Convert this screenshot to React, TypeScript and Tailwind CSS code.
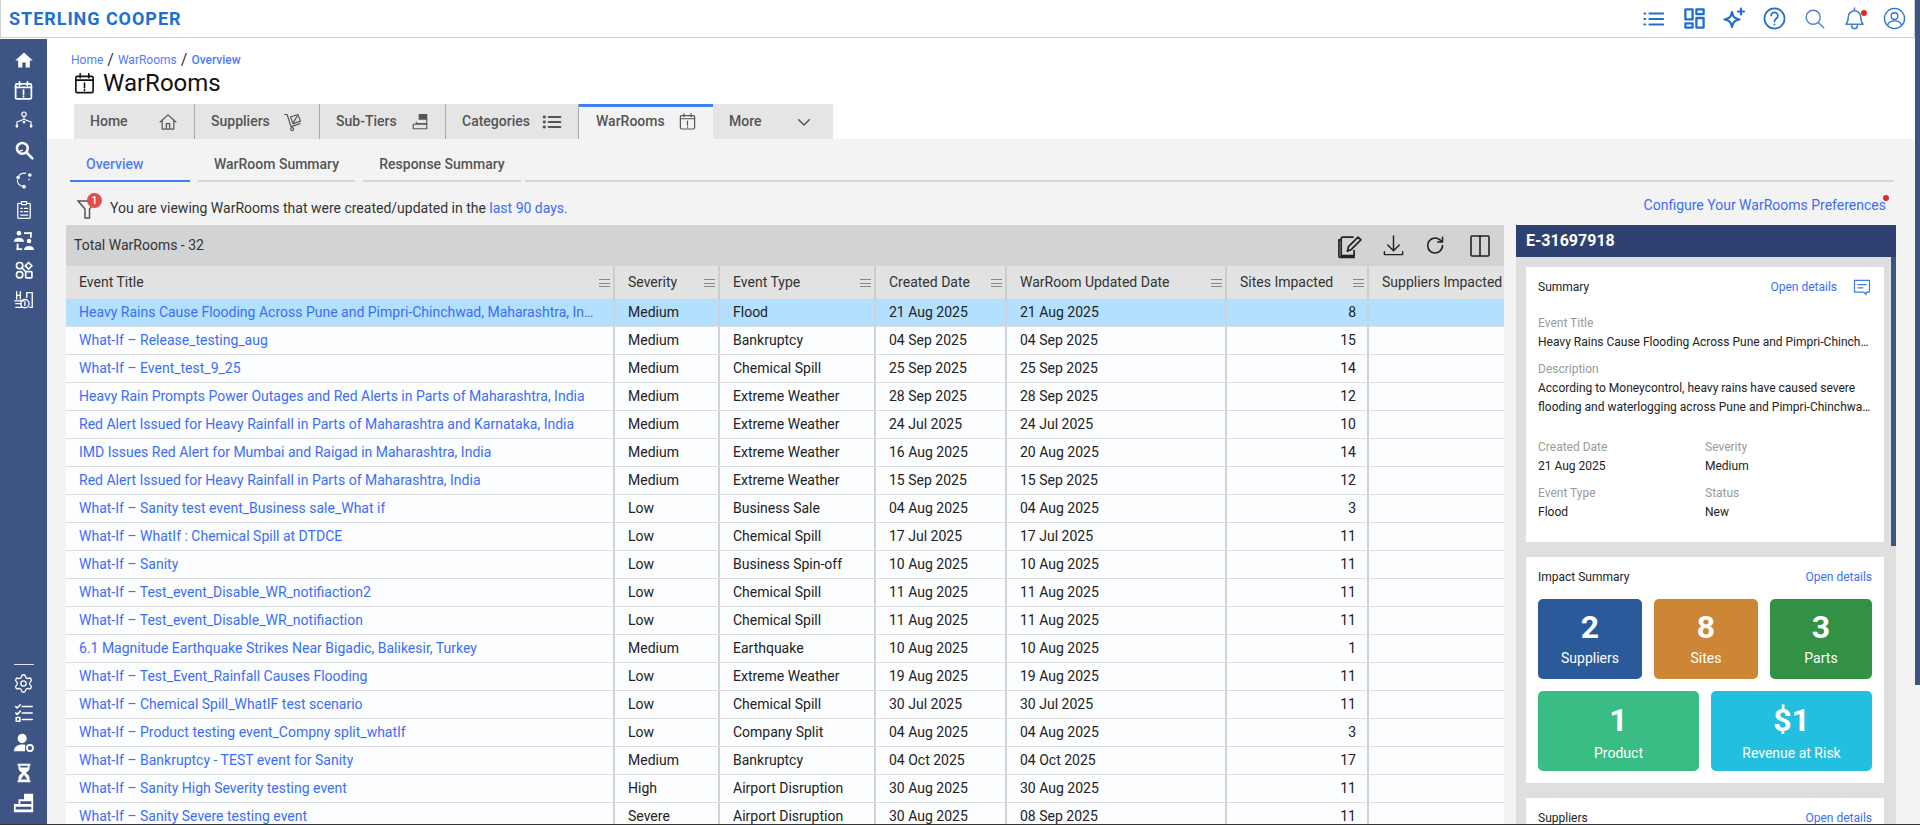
import React from "react";
import { Settings } from "lucide-react";

const Svg = ({ s = 20, c = "", children, fill = "none", sw = 1.6 }: any) => (
  <svg width={s} height={s} viewBox="0 0 24 24" fill={fill} stroke={fill === "none" ? "currentColor" : "none"} strokeWidth={sw} strokeLinecap="round" strokeLinejoin="round" className={c}>
    {children}
  </svg>
);

const CalAlert = ({ s = 20, c = "", sw = 2 }: any) => (
  <Svg s={s} c={c} sw={sw}>
    <rect x="3" y="4.5" width="18" height="17" rx="1.5" />
    <path d="M3 8.500h18M7.500 2v4M16.500 2v4M12 11.500v5M12 18.600v.6" />
  </Svg>
);

const sideTop = [
  <Svg key="a" fill="white"><path d="M12 3 1.500 12.500H5V21h5v-6h4v6h5v-8.500h3.500z" /></Svg>,
  <CalAlert key="b" s={21} sw={2} />,
  <Svg key="c" sw={1.400}><circle cx="12" cy="5" r="2.600" /><path d="M12 8v3M3.500 18v-3.500L12 11l8.500 3.500V18" /><circle cx="3.500" cy="19.500" r="1" fill="white" /><circle cx="20.500" cy="19.500" r="1" fill="white" /><circle cx="12" cy="14.500" r="1" fill="white" /></Svg>,
  <Svg key="d" sw={3}><circle cx="10" cy="10" r="6.500" /><path d="m15 15 7 7" /><path d="M6 15c.5-2 2-2.500 4-2.500" strokeWidth="1.500" /></Svg>,
  <Svg key="e" sw={1.400}><path d="M6 6.500A8 8 0 0 1 14 4M4 12a8 8 0 0 0 6 7.500" /><circle cx="19" cy="6" r="1.500" fill="white" /><circle cx="5" cy="9" r="1.500" fill="white" /><circle cx="12" cy="20" r="1.500" fill="white" /><path d="M18 11v1" /></Svg>,
  <Svg key="f" sw={1.500}><rect x="4.500" y="4" width="15" height="18" rx="1" /><rect x="9" y="2" width="6" height="3.500" fill="#3d5484" /><path d="M8 10h2M12.500 10h4M8 14h2M12.500 14h4M8 18h8.500" /></Svg>,
  <Svg key="g" fill="white" s={22}><circle cx="6.500" cy="4.500" r="2.500" /><path d="M1 14c0-3 2.500-4.500 5.500-4.500S12 11 12 14z" /><circle cx="17.500" cy="13" r="2.500" /><path d="M12 23c0-3 2.500-4.500 5.500-4.500S23 20 23 23z" /><rect x="12" y="3.500" width="8" height="2" /><rect x="18.500" y="3.500" width="2" height="6" /><rect x="4" y="16" width="2" height="7" /><rect x="4" y="21" width="6" height="2" /></Svg>,
  <Svg key="h" sw={2}><rect x="3" y="3" width="7.500" height="7.500" rx="3.500" /><path d="m17.500 3 4 4-4 4-4-4z" /><rect x="3" y="14" width="7.500" height="7.500" rx="3.500" /><rect x="14" y="14" width="7.500" height="7.500" rx="1" /><path d="m10 10 4 4" /></Svg>,
  <Svg key="i" sw={1.500} s={22}><path d="M4 3v8M8 3v8M4 7h4M2 13h10M3 16h6M3 20h7M15 4h6v16h-3M15 4v5" /><circle cx="13" cy="16" r="4.500" /><path d="M13 14v4" /></Svg>,
];

const sideBottom = [
  <Settings key="a" size={21} strokeWidth={1.500} />,
  <Svg key="b" sw={1.700} s={22}><path d="M10 5h11M10 12h11M10 19h11" /><path d="m3 5 1.500 1.500L8 3M3 12l1.500 1.500L8 10" /><rect x="3.500" y="17" width="4" height="4" /></Svg>,
  <Svg key="c" fill="white" s={22}><circle cx="10" cy="7" r="5" /><path d="M1 21c0-5 4-7.500 9-7.500 1.500 0 2.500.2 3.500.5l-.5 7z" /><circle cx="18.500" cy="17.500" r="3.300" fill="none" stroke="white" strokeWidth="2" /></Svg>,
  <Svg key="d" fill="white" s={22}><path d="M5 2h14v2h-1v3c0 2.500-3 4-4 5 1 1 4 2.500 4 5v3h1v2H5v-2h1v-3c0-2.500 3-4 4-5-1-1-4-2.500-4-5V4H5zm3 2v2h8V4zm4 10-3.500 5h7z" fillRule="evenodd" /></Svg>,
  <Svg key="e" fill="white" s={22}><path d="M12 2h10v20H1v-9h5V8h6zm-4 8v3h12v-3zM3 16v3h17v-3z" fillRule="evenodd" /></Svg>,
];

const cols = [
  "w-[549px]",
  "w-[105px]",
  "w-[156px]",
  "w-[131px]",
  "w-[220px]",
  "w-[142px]",
  "w-[180px]",
];
const heads = ["Event Title", "Severity", "Event Type", "Created Date", "WarRoom Updated Date", "Sites Impacted", "Suppliers Impacted"];

const rows: [string, string, string, string, string, string][] = [
  ["Heavy Rains Cause Flooding Across Pune and Pimpri-Chinchwad, Maharashtra, India", "Medium", "Flood", "21 Aug 2025", "21 Aug 2025", "8"],
  ["What-If – Release_testing_aug", "Medium", "Bankruptcy", "04 Sep 2025", "04 Sep 2025", "15"],
  ["What-If – Event_test_9_25", "Medium", "Chemical Spill", "25 Sep 2025", "25 Sep 2025", "14"],
  ["Heavy Rain Prompts Power Outages and Red Alerts in Parts of Maharashtra, India", "Medium", "Extreme Weather", "28 Sep 2025", "28 Sep 2025", "12"],
  ["Red Alert Issued for Heavy Rainfall in Parts of Maharashtra and Karnataka, India", "Medium", "Extreme Weather", "24 Jul 2025", "24 Jul 2025", "10"],
  ["IMD Issues Red Alert for Mumbai and Raigad in Maharashtra, India", "Medium", "Extreme Weather", "16 Aug 2025", "20 Aug 2025", "14"],
  ["Red Alert Issued for Heavy Rainfall in Parts of Maharashtra, India", "Medium", "Extreme Weather", "15 Sep 2025", "15 Sep 2025", "12"],
  ["What-If – Sanity test event_Business sale_What if", "Low", "Business Sale", "04 Aug 2025", "04 Aug 2025", "3"],
  ["What-If – WhatIf : Chemical Spill at DTDCE", "Low", "Chemical Spill", "17 Jul 2025", "17 Jul 2025", "11"],
  ["What-If – Sanity", "Low", "Business Spin-off", "10 Aug 2025", "10 Aug 2025", "11"],
  ["What-If – Test_event_Disable_WR_notifiaction2", "Low", "Chemical Spill", "11 Aug 2025", "11 Aug 2025", "11"],
  ["What-If – Test_event_Disable_WR_notifiaction", "Low", "Chemical Spill", "11 Aug 2025", "11 Aug 2025", "11"],
  ["6.1 Magnitude Earthquake Strikes Near Bigadic, Balikesir, Turkey", "Medium", "Earthquake", "10 Aug 2025", "10 Aug 2025", "1"],
  ["What-If – Test_Event_Rainfall Causes Flooding", "Low", "Extreme Weather", "19 Aug 2025", "19 Aug 2025", "11"],
  ["What-If – Chemical Spill_WhatIF test scenario", "Low", "Chemical Spill", "30 Jul 2025", "30 Jul 2025", "11"],
  ["What-If – Product testing event_Compny split_whatIf", "Low", "Company Split", "04 Aug 2025", "04 Aug 2025", "3"],
  ["What-If – Bankruptcy - TEST event for Sanity", "Medium", "Bankruptcy", "04 Oct 2025", "04 Oct 2025", "17"],
  ["What-If – Sanity High Severity testing event", "High", "Airport Disruption", "30 Aug 2025", "30 Aug 2025", "11"],
  ["What-If – Sanity Severe testing event", "Severe", "Airport Disruption", "30 Aug 2025", "08 Sep 2025", "11"],
];

const tabs = [
  {
    t: "Home", w: "w-[121px]",
    i: <Svg s={20} sw={1.400}><path d="M2.500 12 12 3.500 21.500 12M5 10v10.500h14V10M10 20.500V14h4v6.500" /></Svg>,
  },
  {
    t: "Suppliers", w: "w-[125px]",
    i: <Svg s={20} sw={1.400}><path d="M2 3h3l4.500 14.500M9.500 17.500l11-3.500" /><path d="m9 6 9-3 3 8-9 3z" /><path d="m12 13 5-8" /><circle cx="11" cy="20.500" r="1.800" /></Svg>,
  },
  {
    t: "Sub-Tiers", w: "w-[126px]",
    i: <Svg s={18} sw={1.500}><rect x="11" y="2" width="10" height="6" fill="currentColor" /><path d="M11 8h10v6H7v-2M3 15h18v6H3z" /></Svg>,
  },
  {
    t: "Categories", w: "w-[133px]",
    i: <Svg s={20} sw={2.400}><path d="M8 6h14M8 12h14M8 18h14" /><path d="M2.500 6h.5M2.500 12h.5M2.500 18h.5" strokeWidth="3.400" /></Svg>,
  },
];

const Tile = ({ n, l, c, w = "flex-1", g = "mt-[2px]", t = "mt-[9px]" }: { n: string; l: string; c: string; w?: string; g?: string; t?: string }) => (
  <div className={`${w} h-[80px] rounded-[5px] text-white flex flex-col items-center ${c}`}>
    <div className={`text-[32px] font-bold leading-[38px] ${t}`}>{n}</div>
    <div className={`text-[14px] leading-[20px] ${g}`}>{l}</div>
  </div>
);

const Field = ({ l, v, c = "" }: { l: string; v: string; c?: string }) => (
  <div className={c}>
    <div className="text-[12px] leading-[19px] text-[#9a9a9a]">{l}</div>
    <div className="text-[12px] leading-[19px] text-[#222] truncate">{v}</div>
  </div>
);

const LINK = "text-[#3b6ef8]";

export default function App() {
  return (
    <div className="w-[1920px] h-[825px] flex overflow-hidden text-[#222] bg-white" style={{ fontFamily: "Roboto, sans-serif" }}>
      <div className="w-[1915px] h-[824px] flex flex-col">
        {/* Header */}
        <div className="h-[38px] shrink-0 border-b border-l border-r border-[#cfcfcf] flex items-center justify-between pl-[8px] bg-white">
          <div className="text-[18px] font-bold tracking-[0.95px] text-[#1f6fd0]">STERLING COOPER</div>
          <div className="flex items-center text-[#1f6fd0]">
            <div className="w-[40px] flex justify-center"><Svg s={22} sw={2.200}><path d="M7 6h15M7 12h15M7 18h15" /><path d="M1.500 6h1M1.500 12h1M1.500 18h1" /></Svg></div>
            <div className="w-[40px] flex justify-center"><Svg sw={2.400} s={23}><rect x="2.500" y="2.500" width="7.500" height="10.500" /><rect x="14" y="2.500" width="7.500" height="5" /><rect x="2.500" y="17" width="7.500" height="4.500" /><rect x="14" y="11.500" width="7.500" height="10" /></Svg></div>
            <div className="w-[40px] flex justify-center"><Svg s={24} sw={2.200}><path d="M10 5c1 5 2.500 6.500 7.500 7.500C12.500 13.500 11 15 10 20 9 15 7.500 13.500 2.500 12.500 7.500 11.500 9 10 10 5zM19 1.500v6M16 4.500h6" /></Svg></div>
            <div className="w-[40px] flex justify-center"><Svg s={23} sw={1.800}><circle cx="12" cy="12" r="10.500" /><path d="M8.500 9a3.500 3.500 0 1 1 5.500 3c-1.300.8-2 1.500-2 3M12 18v.3" /></Svg></div>
            <div className="w-[40px] flex justify-center"><Svg s={21} sw={1.600} c="text-[#4a7fd4]"><circle cx="10.500" cy="10.500" r="8" /><path d="m16.500 16.500 6 6" /></Svg></div>
            <div className="w-[40px] flex justify-center">
              <div className="relative text-[#4a7fd4]">
                <Svg s={23} sw={1.600}><path d="M12 1v2M3 18c2-2 2.500-3.500 2.500-7.500a6.500 6.500 0 0 1 13 0c0 4 .5 5.500 2.500 7.500zM9 18v1.500a3 3 0 0 0 6 0V18" /></Svg>
                <span className="absolute top-[3px] right-[-1px] w-[6px] h-[6px] rounded-full bg-[#e32929]" />
              </div>
            </div>
            <div className="w-[40px] flex justify-center"><Svg s={23} sw={1.400} c="text-[#2f74cf]"><circle cx="12" cy="12" r="10.500" /><circle cx="12" cy="9.500" r="3.500" /><path d="M5 19c.5-3 3-4.500 7-4.500s6.500 1.500 7 4.500" /></Svg></div>
          </div>
        </div>

        <div className="flex-1 flex mt-px min-h-0">
          {/* Sidebar */}
          <div className="w-[47px] shrink-0 bg-[#3d5484] text-white flex flex-col justify-between items-center pt-[6px] pb-[6px]">
            <div className="flex flex-col items-center">
              {sideTop.map((ic, i) => (
                <div key={i} className="h-[30px] flex items-center justify-center">{ic}</div>
              ))}
            </div>
            <div className="flex flex-col items-center">
              <div className="w-[20px] h-[1px] bg-[#dfe4ee] mb-[3px]" />
              {sideBottom.map((ic, i) => (
                <div key={i} className="h-[30px] flex items-center justify-center">{ic}</div>
              ))}
            </div>
          </div>

          {/* Main */}
          <div className="flex-1 min-w-0 flex flex-col">
            <div className="h-[100px] shrink-0 bg-white pl-[24px] pt-[12px]">
              <div className="h-[17px] flex items-center text-[12px] text-[#4f7dff] gap-[4px]">
                <span>Home</span>
                <span className="text-[16px] text-[#333]">/</span>
                <span>WarRooms</span>
                <span className="text-[16px] text-[#333]">/</span>
                <span className="font-medium">Overview</span>
              </div>
              <div className="flex items-center h-[30px] ml-[2px] text-[#111]">
                <CalAlert s={23} sw={1.700} />
                <span className="text-[24px] ml-[7px] leading-[30px]">WarRooms</span>
              </div>
              <div className="flex h-[35px] ml-[3px] mt-[6px]">
                {tabs.map((t) => (
                  <div key={t.t} className={`${t.w} h-[35px] bg-[#e5e5e5] border-r border-[#a9a9a9] flex items-center justify-between pl-[16px] pr-[16px] text-[14px] font-medium text-[#555]`}>
                    <span>{t.t}</span>
                    {t.i}
                  </div>
                ))}
                <div className="w-[134px] h-[35px] bg-[#f3f3f3] border-t-[3px] border-[#3f80f4] flex items-center justify-between pl-[17px] pr-[16px] pb-[3px] text-[14px] font-medium text-[#555]">
                  <span>WarRooms</span>
                  <CalAlert s={19} sw={1.500} />
                </div>
                <div className="w-[120px] h-[35px] bg-[#e5e5e5] flex items-center justify-between pl-[16px] pr-[20px] text-[14px] font-medium text-[#555]">
                  <span>More</span>
                  <Svg s={18} sw={2}><path d="m5 9 7 7 7-7" /></Svg>
                </div>
              </div>
            </div>

            <div className="flex-1 min-h-0 bg-[#f3f3f3] flex flex-col overflow-hidden">
              {/* Sub tabs */}
              <div className="h-[43px] shrink-0 flex pl-[23px] pr-[21px] text-[14px] font-medium text-[#555]">
                <div className="w-[120px] border-b-[2px] border-[#3f80f4] text-[#4f7dff] flex items-center pl-[16px] pt-[14px] pb-[5px]">Overview</div>
                <div className="w-[157px] ml-[8px] border-b-[2px] border-[#d6d6d6] flex items-center justify-center pt-[14px] pb-[5px]">WarRoom Summary</div>
                <div className="w-[158px] ml-[8px] border-b-[2px] border-[#d6d6d6] flex items-center justify-center pt-[14px] pb-[5px]">Response Summary</div>
                <div className="flex-1 ml-[4px] border-b-[2px] border-[#d6d6d6]" />
              </div>

              {/* Info row */}
              <div className="h-[43px] shrink-0 flex justify-between pl-[29px] pr-[29px] text-[14px]">
                <div className="flex items-start">
                  <div className="relative w-[34px] h-[26px] mt-[11px] text-[#555]">
                    <svg width="20" height="20" viewBox="0 0 20 20" fill="none" stroke="currentColor" strokeWidth="1.500" className="absolute left-[1px] top-[6px]">
                      <path d="M1 2h18l-6.500 8v9H8v-9z" />
                    </svg>
                    <span className="absolute left-[11px] top-[0px] w-[15px] h-[15px] rounded-full bg-[#df4d4d] text-white text-[11px] font-medium leading-[15px] text-center">1</span>
                  </div>
                  <span className="mt-[16px] leading-[21px] text-[#333]">You are viewing WarRooms that were created/updated in the <span className={LINK}>last 90 days.</span></span>
                </div>
                <div className={`relative ${LINK} mt-[13px] h-[21px] leading-[21px]`}>
                  Configure Your WarRooms Preferences
                  <span className="absolute right-[-3px] top-[0px] w-[6px] h-[6px] rounded-full bg-[#e32929]" />
                </div>
              </div>

              <div className="flex-1 min-h-0 flex pl-[19px]">
                {/* Table */}
                <div className="w-[1438px] shrink-0 overflow-hidden flex flex-col">
                  <div className="h-[41px] shrink-0 bg-[#d3d3d3] flex items-center justify-between pl-[8px] pr-[12px] text-[14px] text-[#333]">
                    <span>Total WarRooms - 32</span>
                    <div className="flex items-center text-[#222]">
                      <Svg s={27} sw={1.500}><path d="M16 4.500H7a1.500 1.500 0 0 0-1.500 1.500v15H17M5.500 7H3.500v14.500a1 1 0 0 0 1 1H17" /><path d="M17 21v-4.500M11 17l1-4 8.500-8.500 2.500 2.500L14.500 15.500z" /></Svg>
                      <Svg s={23} sw={1.500} c="ml-[20px]"><path d="M12 2v15M6 11.500l6 6 6-6M2.500 18.500v3h19v-3" /></Svg>
                      <Svg s={21} sw={1.800} c="ml-[20px]"><path d="M20 12a8.500 8.500 0 1 1-3-6.500L20 8M20 2.500V8h-5.500" /></Svg>
                      <Svg s={24} sw={1.600} c="ml-[22px]"><rect x="3" y="2" width="18" height="20" rx="1" /><path d="M12 2v20" /></Svg>
                    </div>
                  </div>
                  <div className="h-[33px] shrink-0 bg-[#e2e2e2] flex w-[1483px] text-[14px] text-[#333]">
                    {heads.map((h, i) => (
                      <div key={h} className={`${cols[i]} shrink-0 h-full relative flex items-center pl-[13px] ${i < 6 ? "border-r-2 border-[#c9ced3]" : ""}`}>
                        <span className="whitespace-nowrap">{h}</span>
                        {i < 6 && (
                          <span className="absolute right-[3px] top-[13px] w-[11px] h-[8px] border-y-[1px] border-[#888] flex items-center">
                            <span className="w-full h-[1px] bg-[#888]" />
                          </span>
                        )}
                      </div>
                    ))}
                  </div>
                  {rows.map((r, ri) => (
                    <div key={ri} className={`h-[28px] shrink-0 flex w-[1483px] text-[14px] border-b border-[#dcdde0] ${ri === 0 ? "bg-[#b3e0fe]" : "bg-[#fcfdff]"}`}>
                      <div className={`${cols[0]} shrink-0 border-r-2 border-[#cfd3d7] pl-[13px] pr-[17px] flex items-center min-w-0`}>
                        <span className={`truncate ${LINK}`}>{r[0]}</span>
                      </div>
                      <div className={`${cols[1]} shrink-0 border-r-2 border-[#cfd3d7] pl-[13px] flex items-center`}>{r[1]}</div>
                      <div className={`${cols[2]} shrink-0 border-r-2 border-[#cfd3d7] pl-[13px] flex items-center`}>{r[2]}</div>
                      <div className={`${cols[3]} shrink-0 border-r-2 border-[#cfd3d7] pl-[13px] flex items-center`}>{r[3]}</div>
                      <div className={`${cols[4]} shrink-0 border-r-2 border-[#cfd3d7] pl-[13px] flex items-center`}>{r[4]}</div>
                      <div className={`${cols[5]} shrink-0 border-r-2 border-[#cfd3d7] pr-[11px] flex items-center justify-end`}>{r[5]}</div>
                      <div className={`${cols[6]} shrink-0`} />
                    </div>
                  ))}
                </div>

                {/* Right panel */}
                <div className="w-[380px] ml-[12px] shrink-0 flex flex-col">
                  <div className="h-[32px] shrink-0 bg-[#2e4170] text-white text-[16px] font-bold pl-[10px] flex items-center">E-31697918</div>
                  <div className="flex-1 min-h-0 flex bg-[#dfdfdf] overflow-hidden">
                    <div className="flex-1 min-w-0 pl-[10px] pr-[7px] pt-[10px] flex flex-col gap-[15px]">
                      {/* Summary */}
                      <div className="h-[275px] shrink-0 bg-white pl-[12px] pr-[12px] pt-[10px]">
                        <div className="flex items-center justify-between h-[19px] text-[12px]">
                          <span>Summary</span>
                          <div className="flex items-center">
                            <span className={LINK}>Open details</span>
                            <Svg s={20} sw={1.500} c="ml-[15px] text-[#3f80e0]"><path d="M3 4h18v14h-4v3l-3-3H3z" /><path d="M7 9h10M7 13h6" /></Svg>
                          </div>
                        </div>
                        <Field c="mt-[18px] w-[331px]" l="Event Title" v="Heavy Rains Cause Flooding Across Pune and Pimpri-Chinchwad, Maharashtra, India" />
                        <div className="text-[12px] leading-[19px] text-[#9a9a9a] mt-[8px]">Description</div>
                        <div className="text-[12px] leading-[19px]">According to Moneycontrol, heavy rains have caused severe</div>
                        <div className="text-[12px] leading-[19px] truncate w-[334px]">flooding and waterlogging across Pune and Pimpri-Chinchwad, Maharashtra</div>
                        <div className="flex mt-[21px]">
                          <Field c="w-[167px]" l="Created Date" v="21 Aug 2025" />
                          <Field l="Severity" v="Medium" />
                        </div>
                        <div className="flex mt-[8px]">
                          <Field c="w-[167px]" l="Event Type" v="Flood" />
                          <Field l="Status" v="New" />
                        </div>
                      </div>
                      {/* Impact */}
                      <div className="h-[226px] shrink-0 bg-white px-[12px] pt-[10px]">
                        <div className="flex justify-between h-[19px] text-[12px] items-center">
                          <span>Impact Summary</span>
                          <span className={LINK}>Open details</span>
                        </div>
                        <div className="flex gap-[12px] mt-[13px]">
                          <Tile n="2" l="Suppliers" c="bg-[#2b5a9b]" w="w-[104px]" />
                          <Tile n="8" l="Sites" c="bg-[#cc8635]" w="w-[104px]" />
                          <Tile n="3" l="Parts" c="bg-[#339146]" />
                        </div>
                        <div className="flex gap-[12px] mt-[12px]">
                          <Tile n="1" l="Product" c="bg-[#3abd84]" t="mt-[10px]" g="mt-[4px]" />
                          <Tile n="$1" l="Revenue at Risk" c="bg-[#22bfe0]" t="mt-[10px]" g="mt-[4px]" />
                        </div>
                      </div>
                      {/* Suppliers */}
                      <div className="flex-1 bg-white px-[12px] pt-[10px]">
                        <div className="flex justify-between h-[19px] text-[12px] items-center">
                          <span>Suppliers</span>
                          <span className={LINK}>Open details</span>
                        </div>
                      </div>
                    </div>
                    <div className="w-[5px] shrink-0 flex flex-col">
                      <div className="h-[289px] shrink-0 bg-[#3d5484]" />
                    </div>
                  </div>
                </div>
              </div>
            </div>
          </div>
        </div>
      </div>
      <div className="w-[5px] shrink-0 h-[824px] bg-[#f3f3f3]">
        <div className="h-[685px] bg-[#3d5484]" />
      </div>
      <div className="fixed left-0 bottom-0 w-[1920px] h-[1px] bg-[#333]" />
    </div>
  );
}
